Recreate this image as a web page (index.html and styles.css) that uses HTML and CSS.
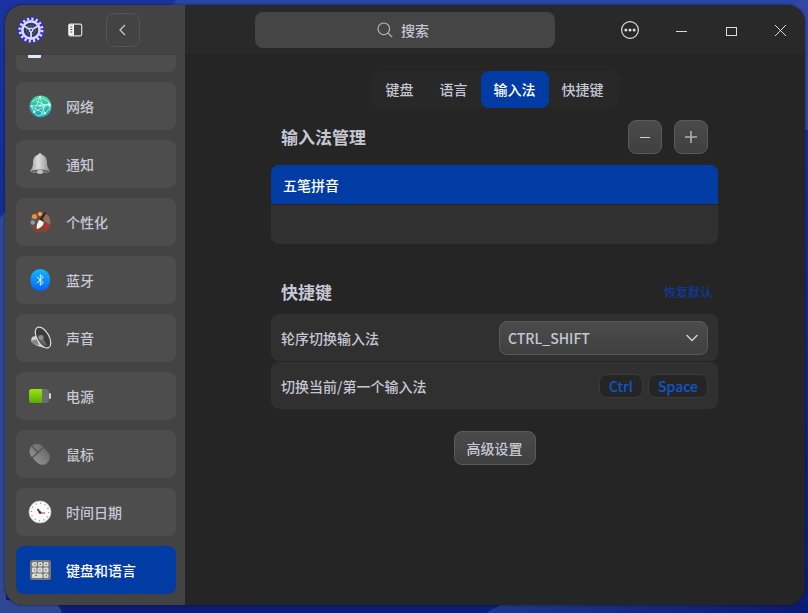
FILE: index.html
```html
<!DOCTYPE html>
<html lang="zh-CN">

<head>
    <meta charset="utf-8">
    <title>键盘和语言</title>
    <link rel="stylesheet" href="styles.css">
</head>

<body>
    <!-- desktop wallpaper behind the window -->
    <svg class="wallpaper" viewBox="0 0 808 613" preserveAspectRatio="none" aria-hidden="true">
        <defs>
            <linearGradient id="wpBase" x1="0" y1="0" x2="0" y2="1">
                <stop offset="0" stop-color="#1b33a0"/>
                <stop offset="1" stop-color="#0b1e78"/>
            </linearGradient>
            <linearGradient id="wpBottom" x1="0" y1="0" x2="1" y2="0">
                <stop offset="0" stop-color="#1f398c"/>
                <stop offset="1" stop-color="#0a1a70"/>
            </linearGradient>
        </defs>
        <rect width="808" height="613" fill="url(#wpBase)"/>
        <path d="M176 0H808V20L170 8z" fill="#2845a8"/>
        <path d="M788 8L800 0H808V130H798z" fill="#3445a4"/>
        <path d="M0 218L6 210V600H56L62 613H0z" fill="#2f4793"/>
        <path d="M486 613L506 602H808V613z" fill="url(#wpBottom)"/>
    </svg>

    <div class="window">
        <aside class="sidebar">
            <div class="sidebar-top">
                <svg class="logo" viewBox="0 0 26 26" aria-hidden="true">
                    <circle cx="13" cy="13" r="13" fill="#3a24e0"/>
                    <circle cx="13" cy="13" r="11" fill="none" stroke="#d5d9f2" stroke-width="3" stroke-dasharray="2.2 2.12"/>
                    <circle cx="13" cy="13" r="8.6" fill="#33395c" stroke="#d5d9f2" stroke-width="2.6"/>
                    <circle cx="13" cy="13" r="4.4" fill="none" stroke="#5a6190" stroke-width="1"/>
                    <path d="M13 13L6 9M13 13L20 9M13 13V21" stroke="#d5d9f2" stroke-width="1.800"/>
                    <circle cx="13" cy="13" r="2.4" fill="#d5d9f2"/>
                    <circle cx="13" cy="13" r="1.1" fill="#444a78"/>
                </svg>
                <button class="icon-btn" aria-label="侧边栏">
                    <svg width="16" height="16" viewBox="0 0 16 16">
                        <rect x="1.7" y="2.2" width="13" height="11.6" rx="1.5" fill="none" stroke="#dcdcdc" stroke-width="1.2"/>
                        <path d="M2 2.5h5v11H2z" fill="#f4f4f4"/>
                        <path d="M3.3 5h2M3.3 7.5h2M3.3 10h2" stroke="#444" stroke-width="1.1"/>
                    </svg>
                </button>
                <button class="icon-btn back" aria-label="返回">
                    <svg width="16" height="16" viewBox="0 0 16 16" fill="none" stroke="#c8c8c8" stroke-width="1.3">
                        <path d="M10 3L5 8l5 5"/>
                    </svg>
                </button>
            </div>

            <nav class="menu">
                <a class="menu-item" href="#display" aria-label="显示">
                    <svg viewBox="0 0 24 24"><rect x="1" y="4" width="22" height="12" rx="2" fill="#4c9be0"/><rect x="0" y="16" width="13" height="6" rx="1" fill="#dcebfa"/></svg>
                </a>
                <a class="menu-item" href="#network">
                    <svg viewBox="0 0 24 24">
                        <defs>
                            <linearGradient id="net" x1="0.6" y1="0" x2="0.4" y2="1">
                                <stop offset="0" stop-color="#42dca0"/>
                                <stop offset="1" stop-color="#1a9cb8"/>
                            </linearGradient>
                        </defs>
                        <circle cx="12.5" cy="12.5" r="11" fill="url(#net)"/>
                        <path d="M12 3L6 18L22 10L3 12L17 20L12 3L4 8M12 3L20 7L22 14L17 20L10 22L6 18L3 12M8 7l9 4l-4 10M10 13l11-3" fill="none" stroke="#c8fff0" stroke-width="0.7"/>
                        <g fill="#e4fff8">
                            <circle cx="12" cy="3" r="1"/><circle cx="6" cy="18" r="1"/><circle cx="21.5" cy="11" r="1.4"/><circle cx="3.5" cy="12" r="1"/><circle cx="17" cy="19" r="1"/><circle cx="12" cy="11.5" r="1"/>
                        </g>
                    </svg>
                    网络
                </a>
                <a class="menu-item" href="#notification">
                    <svg viewBox="0 0 24 24">
                        <defs>
                            <linearGradient id="bell" x1="0" x2="1" y1="0" y2="0">
                                <stop offset="0" stop-color="#999"/>
                                <stop offset="0.4" stop-color="#dedede"/>
                                <stop offset="1" stop-color="#8c8c8c"/>
                            </linearGradient>
                        </defs>
                        <circle cx="12" cy="2.5" r="1.6" fill="#ccc"/>
                        <path d="M12 2.500c-5 0-7 4-7 8 0 4-1 6-3 8.500 1 3 19 3 20 0-2-2.500-3-4.500-3-8.500 0-4-2-8-7-8z" fill="url(#bell)"/>
                        <path d="M2.500 19c5-2 14-2 19 0-2 2.500-17 2.500-19 0z" fill="#666"/>
                        <ellipse cx="12" cy="19.800" rx="3" ry="2" fill="#c0c0c0"/>
                    </svg>
                    通知
                </a>
                <a class="menu-item" href="#personalization">
                    <svg viewBox="0 0 24 24">
                        <path d="M13 1C6 1 2 6 2 12c0 7 5 11 11 11 7 0 10-5 10-10C23 6 19 1 13 1z" fill="#754a39"/>
                        <path d="M15 3c6 1 8 6 7 12l-7-5z" fill="#94705c"/>
                        <circle cx="6.500" cy="6.500" r="2.600" fill="#d69350"/>
                        <circle cx="12" cy="4" r="2" fill="#ebad55"/>
                        <circle cx="4.800" cy="12.500" r="2.200" fill="#62a9df"/>
                        <circle cx="18" cy="16.500" r="2.400" fill="#c52745"/>
                        <path d="M17.500 2.500l-4.500 7" stroke="#1c222c" stroke-width="2"/>
                        <path d="M12 9l3 2c2 2-1 7-6 8-1-3 0-6 3-10z" fill="#f3f2ed"/>
                        <path d="M11.500 8.500l4 2.500" stroke="#222d3b" stroke-width="1.500"/>
                    </svg>
                    个性化
                </a>
                <a class="menu-item" href="#bluetooth">
                    <svg viewBox="0 0 24 24">
                        <defs>
                            <linearGradient id="bt" x1="0" y1="0" x2="0" y2="1">
                                <stop offset="0" stop-color="#10baff"/>
                                <stop offset="1" stop-color="#0662ff"/>
                            </linearGradient>
                        </defs>
                        <rect x="2.500" y="1" width="19.500" height="22" rx="9.750" fill="url(#bt)"/>
                        <path d="M8.800 9l6.400 5.600-2.900 2.600V6.800l2.900 2.600L8.800 15" fill="none" stroke="#e6f5ff" stroke-width="1"/>
                    </svg>
                    蓝牙
                </a>
                <a class="menu-item" href="#sound">
                    <svg viewBox="0 0 24 24">
                        <path d="M8 10c-4 0-6 3-4 6s8 5 13 6l2-2-9-12z" fill="#d0d0d0"/>
                        <path d="M3 15c1 3 4 4 8 4l-2-6z" fill="#888"/>
                        <ellipse cx="15" cy="11.500" rx="6" ry="11.500" transform="rotate(-30 15 11.500)" fill="#3c3c3c" stroke="#dedede" stroke-width="1.200"/>
                        <path d="M10 9c0 5 3 10 9 11-1-4-5-10-9-11z" fill="#666"/>
                        <circle cx="13" cy="11.500" r="2.600" fill="#8d8d8d"/>
                    </svg>
                    声音
                </a>
                <a class="menu-item" href="#power">
                    <svg viewBox="0 0 24 24">
                        <defs>
                            <linearGradient id="bat" x1="0" y1="0" x2="0" y2="1">
                                <stop offset="0" stop-color="#9be315"/>
                                <stop offset="1" stop-color="#58ad00"/>
                            </linearGradient>
                        </defs>
                        <rect x="1" y="5" width="20" height="14" rx="3" fill="#6c6c70"/>
                        <path d="M4 5h10v14H4a3 3 0 0 1-3-3V8a3 3 0 0 1 3-3z" fill="url(#bat)"/>
                        <rect x="21" y="9" width="2" height="6" rx="1" fill="#d4d4d4"/>
                    </svg>
                    电源
                </a>
                <a class="menu-item" href="#mouse">
                    <svg viewBox="0 0 24 24">
                        <defs>
                            <linearGradient id="mouse" x1="0" y1="0" x2="1" y2="0">
                                <stop offset="0" stop-color="#8e8e8e"/>
                                <stop offset="1" stop-color="#6c6c6c"/>
                            </linearGradient>
                        </defs>
                        <g transform="rotate(-42 12 12)">
                            <rect x="4" y="0.500" width="15" height="23" rx="7.500" fill="url(#mouse)"/>
                            <path d="M4 9.500h15M11.500 0.500v9" stroke="#515151" stroke-width="1.200"/>
                        </g>
                    </svg>
                    鼠标
                </a>
                <a class="menu-item" href="#datetime">
                    <svg viewBox="0 0 24 24">
                        <circle cx="12" cy="12" r="11" fill="#fafafa" stroke="#cfcfcf" stroke-width="0.600"/>
                        <circle cx="12" cy="12" r="8.800" fill="none" stroke="#888" stroke-width="1.300" stroke-dasharray="0.900 3.700"/>
                        <path d="M12 12.500L9.500 9" stroke="#333" stroke-width="1.600"/>
                        <path d="M12 13h5" fill="none" stroke="#d34050" stroke-width="1.200"/>
                        <circle cx="12" cy="12.500" r="1.300" fill="#333"/>
                    </svg>
                    时间日期
                </a>
                <a class="menu-item active" href="#keyboard" aria-current="page">
                    <svg viewBox="0 0 24 24">
                        <rect x="2" y="2" width="21" height="20" rx="2.500" fill="#777"/>
                        <g fill="#dadada">
                            <rect x="4" y="4" width="5" height="4.500" rx="1.500"/><rect x="10" y="4" width="4.500" height="4.500" rx="1.500"/><rect x="15.500" y="4" width="5" height="4.500" rx="1.500"/>
                            <rect x="4" y="9.500" width="4.500" height="5" rx="1.300"/><rect x="9.500" y="9.500" width="5" height="5" rx="1.300"/><rect x="15.500" y="9.500" width="5" height="5" rx="1.300"/>
                            <rect x="4" y="15.500" width="10.500" height="4.500" rx="1.500"/><rect x="15.500" y="15.500" width="5" height="4.500" rx="1.500"/>
                        </g>
                        <path d="M6 6.300h1.500M11.500 6.300h1.500M17.500 6.300h1.500M6 12h1M11.500 12h1M17 12h1.500M7 18l2-1M17.500 17.800h1.500" stroke="#555" stroke-width="1"/>
                    </svg>
                    键盘和语言
                </a>
            </nav>
        </aside>

        <main class="main">
            <header class="titlebar">
                <label class="search">
                    <svg width="16" height="16" viewBox="0 0 16 16" fill="none" stroke="#b4b4b4" stroke-width="1.2">
                        <circle cx="6.8" cy="6.8" r="5.8"/>
                        <path d="M11 11l4.200 4.200"/>
                    </svg>
                    <input type="text" placeholder="搜索" aria-label="搜索">
                </label>
                <div class="window-buttons">
                    <button aria-label="菜单">
                        <svg width="20" height="20" viewBox="0 0 20 20">
                            <circle cx="10" cy="10" r="8.400" fill="none" stroke="#dcdcdc" stroke-width="1.200"/>
                            <g fill="#dcdcdc"><circle cx="5.900" cy="10" r="1.500"/><circle cx="10" cy="10" r="1.500"/><circle cx="14.100" cy="10" r="1.500"/></g>
                        </svg>
                    </button>
                    <button aria-label="最小化">
                        <svg width="20" height="20" viewBox="0 0 20 20" stroke="#dcdcdc"><path d="M6 11.500h11"/></svg>
                    </button>
                    <button aria-label="最大化">
                        <svg width="20" height="20" viewBox="0 0 20 20" fill="none" stroke="#dcdcdc"><rect x="6.500" y="7.500" width="10" height="8"/></svg>
                    </button>
                    <button aria-label="关闭">
                        <svg width="20" height="20" viewBox="0 0 20 20" stroke="#dcdcdc"><path d="M5 5l11 11M16 5L5 16"/></svg>
                    </button>
                </div>
            </header>

            <div class="content">
                <div class="tabs">
                    <button>键盘</button>
                    <button>语言</button>
                    <button class="active">输入法</button>
                    <button>快捷键</button>
                </div>

                <section>
                    <div class="section-head">
                        <h2>输入法管理</h2>
                        <div class="tools">
                            <button class="btn square" aria-label="删除">
                                <svg width="16" height="16" viewBox="0 0 16 16" stroke="#d0d0d4"><path d="M3 8.500h10"/></svg>
                            </button>
                            <button class="btn square" aria-label="添加">
                                <svg width="16" height="16" viewBox="0 0 16 16" stroke="#b0b0b6" stroke-width="1.600"><path d="M2 8h12M8 2v12"/></svg>
                            </button>
                        </div>
                    </div>
                    <ul class="im-list">
                        <li class="active">五笔拼音</li>
                        <li></li>
                    </ul>
                </section>

                <section class="shortcuts">
                    <div class="section-head">
                        <h2>快捷键</h2>
                        <a class="reset" href="#reset">恢复默认</a>
                    </div>
                    <div class="row">
                        <label for="switchKey">轮序切换输入法</label>
                        <select id="switchKey">
                            <option>CTRL_SHIFT</option>
                        </select>
                    </div>
                    <div class="row">
                        <span>切换当前/第一个输入法</span>
                        <div class="keys">
                            <kbd>Ctrl</kbd>
                            <kbd>Space</kbd>
                        </div>
                    </div>
                </section>

                <button class="btn advanced">高级设置</button>
            </div>
        </main>
    </div>
</body>

</html>
```

FILE: styles.css
```css
* {
    box-sizing: border-box;
}

body {
    margin: 0;
    height: 100vh;
    padding: 5px 3px 8px 5px;
    overflow: hidden;
    background-color: #1b33a0;
    font-family: "Noto Sans CJK SC", "Noto Sans", sans-serif;
    font-size: 14px;
    font-weight: 500;
    line-height: 20px;
    color: #c5c7d4;
}

button,
input,
select,
kbd {
    font: inherit;
    color: inherit;
}

button {
    padding: 0;
    border: none;
    background: none;
    cursor: pointer;
}

svg {
    display: block;
    flex: none;
}

a {
    color: inherit;
    text-decoration: none;
}

.wallpaper {
    position: absolute;
    top: 0;
    left: 0;
    width: 100%;
    height: 100%;
    z-index: -1;
}

.window {
    display: flex;
    height: 100%;
    border-radius: 18px;
    overflow: hidden;
    background-color: #252525;
    box-shadow: 0 0 3px rgba(0, 0, 0, 0.5);
}

/* sidebar */

.sidebar {
    display: flex;
    flex-direction: column;
    width: 180px;
    background-color: #434343;
}

.sidebar-top {
    display: flex;
    align-items: center;
    gap: 14px;
    flex: none;
    height: 50px;
    padding-left: 13px;
    border-bottom: 1px solid #404040;
}

.logo {
    width: 26px;
    height: 26px;
}

.icon-btn {
    display: flex;
    align-items: center;
    justify-content: center;
    width: 34px;
    height: 34px;
}

.back {
    border: 1px solid #555;
    border-radius: 8px;
}

/* the list is scrolled down to its last entry */
.menu {
    display: flex;
    flex-direction: column;
    justify-content: flex-end;
    gap: 10px;
    flex: 1;
    min-height: 0;
    padding: 0 9px 11px 11px;
    overflow: hidden;
}

.menu-item {
    display: flex;
    align-items: center;
    gap: 14px;
    flex: none;
    height: 48px;
    padding: 0 12px;
    border-radius: 8px;
    background-color: #4d4d4d;
}

.menu-item svg {
    width: 24px;
    height: 24px;
}

.menu-item.active {
    background-color: #003ca3;
    color: #fff;
}

/* main area */

.main {
    display: flex;
    flex-direction: column;
    flex: 1;
}

.titlebar {
    display: flex;
    align-items: center;
    gap: 50px;
    height: 50px;
    padding-left: 70px;
    background-color: #292929;
    border-bottom: 1px solid #222;
}

.search {
    display: flex;
    align-items: center;
    justify-content: center;
    gap: 8px;
    flex: 1;
    height: 36px;
    border-radius: 8px;
    background-color: #454545;
}

.search input {
    width: 32px;
    padding: 0;
    border: none;
    outline: none;
    background: none;
}

.search input:focus {
    width: 200px;
}

.search input::placeholder {
    color: #c5c7d4;
}

.window-buttons {
    display: flex;
}

.window-buttons button {
    display: flex;
    align-items: center;
    justify-content: center;
    width: 50px;
    height: 50px;
}

.content {
    display: flex;
    flex-direction: column;
    padding: 16px 87px 0 86px;
}

.tabs {
    display: flex;
    align-self: center;
    padding: 0 2px;
    border-radius: 8px;
    background-color: #282828;
}

.tabs button {
    height: 37px;
    padding: 0 13px 1px;
    border-radius: 8px;
}

.tabs .active {
    background-color: #003ca3;
    color: #fff;
}

.section-head {
    display: flex;
    align-items: center;
    justify-content: space-between;
    padding: 12px 10px 11px;
}

h2 {
    margin: 0;
    font-size: 17px;
    line-height: 24px;
    font-weight: 700;
}

.tools {
    display: flex;
    gap: 12px;
}

.btn {
    height: 34px;
    border: 1px solid #5a5a5a;
    border-radius: 8px;
    background: linear-gradient(#4a4a4a, #404040);
}

.square {
    display: flex;
    align-items: center;
    justify-content: center;
    width: 34px;
}

.im-list {
    margin: 0;
    padding: 0;
    list-style: none;
    border-radius: 8px;
    overflow: hidden;
    background-color: #303030;
}

.im-list li {
    display: flex;
    align-items: center;
    height: 39px;
    padding: 0 12px;
}

.im-list li + li {
    height: 40px;
    border-top: 1px solid #222;
}

.im-list .active {
    background-color: #003ca3;
    color: #fff;
}

.shortcuts {
    display: flex;
    flex-direction: column;
    gap: 1px;
    margin-top: 24px;
}

.shortcuts .section-head {
    padding: 12px 6px 9px 10px;
}

.reset {
    font-size: 12px;
    color: #0e3a9e;
}

.row {
    display: flex;
    align-items: center;
    justify-content: space-between;
    height: 47px;
    padding: 0 10px;
    border-radius: 8px;
    background-color: #303030;
}

select {
    appearance: none;
    width: 209px;
    height: 34px;
    padding: 0 8px;
    border: 1px solid #5a5a5a;
    border-radius: 8px;
    background: url("data:image/svg+xml,%3Csvg xmlns='http://www.w3.org/2000/svg' width='12' height='8' fill='none' stroke='%23d0d0d0' stroke-width='1.5'%3E%3Cpath d='M.5 1L6 6.500L11.500 1'/%3E%3C/svg%3E") no-repeat right 9px center, linear-gradient(#4b4b4b, #404040);
}

.keys {
    display: flex;
    gap: 5px;
}

kbd {
    height: 24px;
    padding: 1px 9px;
    border: 1px solid #3a3a3a;
    border-radius: 8px;
    background-color: #252525;
    color: #0f55d0;
}

.advanced {
    align-self: center;
    margin-top: 22px;
    padding: 0 12px;
}
```
